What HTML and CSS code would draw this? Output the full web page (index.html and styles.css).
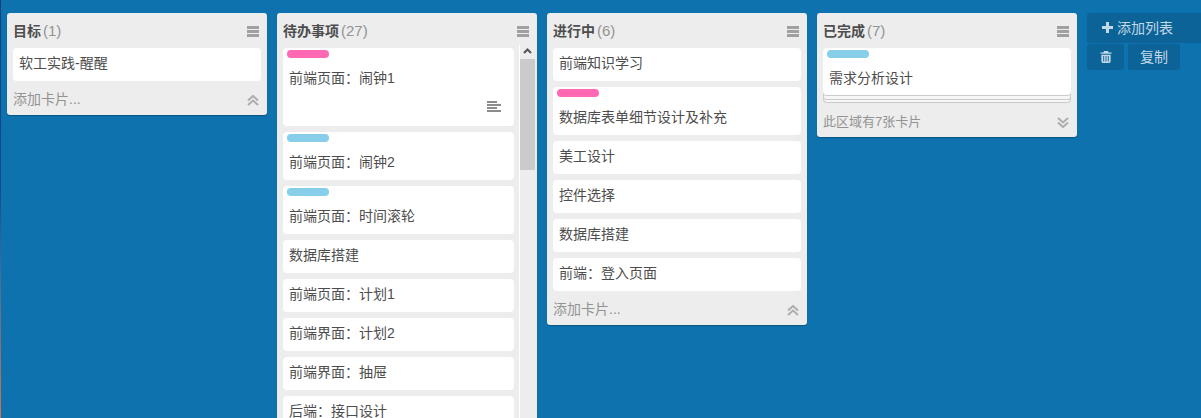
FILE: index.html
```html
<!DOCTYPE html>
<html lang="zh">
<head>
<meta charset="utf-8">
<title>看板</title>
<link rel="stylesheet" href="styles.css">
</head>
<body>
<main class="board">
  <section class="list">
    <header class="list-head"><h2 class="list-title">目标<span class="count">(1)</span></h2><span class="menu"><i></i><i></i><i></i></span></header>
    <div class="cards">
      <article class="card"><p class="card-text">软工实践-醒醒</p></article>
    </div>
    <footer class="list-foot"><span>添加卡片...</span>
      <svg class="chev" viewBox="0 0 12 11"><path d="M1 5.500 6 1l5 4.500M1 10l5-4.500L11 10" /></svg></footer>
  </section>

  <section class="list list-tall">
    <header class="list-head"><h2 class="list-title">待办事项<span class="count">(27)</span></h2><span class="menu"><i></i><i></i><i></i></span></header>
    <div class="scroll-wrap">
      <div class="cards cards-scroll">
        <article class="card has-label has-desc"><span class="label pink"></span><p class="card-text">前端页面：闹钟1</p>
          <svg class="desc" viewBox="0 0 14 11"><path d="M0 0h10v2H0zM0 3h14v2H0zM0 6h10v2H0zM0 9h14v2H0z"/></svg></article>
        <article class="card has-label"><span class="label blue"></span><p class="card-text">前端页面：闹钟2</p></article>
        <article class="card has-label"><span class="label blue"></span><p class="card-text">前端页面：时间滚轮</p></article>
        <article class="card"><p class="card-text">数据库搭建</p></article>
        <article class="card"><p class="card-text">前端页面：计划1</p></article>
        <article class="card"><p class="card-text">前端界面：计划2</p></article>
        <article class="card"><p class="card-text">前端界面：抽屉</p></article>
        <article class="card"><p class="card-text">后端：接口设计</p></article>
      </div>
      <div class="scrollbar">
        <svg class="scroll-up" viewBox="0 0 9 6"><path d="M1 5l3.500-3.500L8 5"/></svg>
        <div class="thumb"></div>
      </div>
    </div>
  </section>

  <section class="list">
    <header class="list-head"><h2 class="list-title">进行中<span class="count">(6)</span></h2><span class="menu"><i></i><i></i><i></i></span></header>
    <div class="cards">
      <article class="card"><p class="card-text">前端知识学习</p></article>
      <article class="card has-label"><span class="label pink"></span><p class="card-text">数据库表单细节设计及补充</p></article>
      <article class="card"><p class="card-text">美工设计</p></article>
      <article class="card"><p class="card-text">控件选择</p></article>
      <article class="card"><p class="card-text">数据库搭建</p></article>
      <article class="card"><p class="card-text">前端：登入页面</p></article>
    </div>
    <footer class="list-foot"><span>添加卡片...</span>
      <svg class="chev" viewBox="0 0 12 11"><path d="M1 5.500 6 1l5 4.500M1 10l5-4.500L11 10" /></svg></footer>
  </section>

  <section class="list">
    <header class="list-head"><h2 class="list-title">已完成<span class="count">(7)</span></h2><span class="menu"><i></i><i></i><i></i></span></header>
    <div class="cards">
      <div class="stack">
        <article class="card has-label card-top"><span class="label blue"></span><p class="card-text">需求分析设计</p></article>
        <div class="stack-edge edge-front"></div>
        <div class="stack-edge edge-back"></div>
      </div>
    </div>
    <footer class="list-foot foot-done"><span>此区域有7张卡片</span>
      <svg class="chev" viewBox="0 0 12 11"><path d="M1 1l5 4.500L11 1M1 5.500 6 10l5-4.500" /></svg></footer>
  </section>

  <aside class="actions">
    <button class="add-list" type="button"><span class="plus"></span>添加列表</button>
    <div class="action-row">
      <button class="act act-trash" type="button" aria-label="删除">
        <svg viewBox="0 0 12 13"><path d="M4 0h4l1 1.500h3V3H0V1.500h3zM1 4h10v7.500q0 1.500-1.500 1.500h-7Q1 13 1 11.500zM3 5.500v6h1v-6zM5.500 5.500v6h1v-6zM8 5.500v6h1v-6z" fill-rule="evenodd"/></svg>
      </button>
      <button class="act act-copy" type="button">复制</button>
    </div>
  </aside>
</main>
</body>
</html>
```

FILE: styles.css
```css
* { box-sizing: border-box; }
html, body { height: 100%; }
body {
  margin: 0;
  background: #0d72ae;
  overflow: hidden;
  font-family: "Liberation Sans", "Noto Sans CJK SC", sans-serif;
  font-size: 14px;
  color: #4d4d4d;
}
body::before {
  content: "";
  position: fixed;
  left: 0;
  top: 0;
  bottom: 0;
  width: 1px;
  background: linear-gradient(#123f80 0, #124a8c 45%, #3f6f98 65%, #d2714f 100%);
}
.board {
  display: flex;
  align-items: flex-start;
  gap: 10px;
  padding: 13px 0 0 7px;
  height: 100%;
  overflow: hidden;
}
.list {
  flex: 0 0 260px;
  background: #ededed;
  border-radius: 3px;
  box-shadow: 0 1px 1px rgba(0,0,0,.25);
}
.list-tall { height: 500px; }
.list-head {
  display: flex;
  justify-content: space-between;
  align-items: flex-start;
  height: 35px;
  padding: 10px 8px 0 6px;
}
.list-title {
  margin: 0;
  font-size: 14px;
  line-height: 16px;
  font-weight: 700;
  color: #4d4d4d;
}
.count { margin-left: 2px; font-size: 15px; font-weight: 400; color: #939393; }
.menu {
  display: flex;
  flex-direction: column;
  gap: 1.5px;
  width: 12px;
  margin-top: 3px;
}
.menu i { display: block; height: 2.5px; background: #a0a0a0; }
.cards {
  display: flex;
  flex-direction: column;
  gap: 6px;
  padding: 0 6px;
}
.card {
  position: relative;
  background: #fff;
  border-radius: 4px;
  padding: 6px 6px 9px;
  min-height: 33px;
}
.card-text {
  margin: 0;
  font-size: 14px;
  line-height: 18px;
  color: #4d4d4d;
}
.has-label { padding-top: 21px; padding-bottom: 9px; }
.has-desc { height: 78px; }
.label {
  position: absolute;
  top: 2px;
  left: 4px;
  width: 42px;
  height: 8px;
  border-radius: 4px;
}
.pink { background: #ff69b4; }
.blue { background: #87ceeb; }
.desc {
  position: absolute;
  right: 13px;
  top: 53px;
  width: 14px;
  height: 11px;
  fill: #8c8c8c;
}
.scroll-wrap { display: flex; height: 465px; }
.cards-scroll { flex: 0 0 237px; padding-right: 0; overflow: hidden; }
.cards-scroll .card { flex: none; }
.scrollbar {
  margin-left: 5px;
  width: 16px;
  margin-top: -3px;
  border-left: 1px solid #fff;
  background: #ededed;
}
.scroll-up {
  display: block;
  width: 9px;
  height: 6px;
  margin: 3px 0 0 3px;
  fill: none;
  stroke: #555;
  stroke-width: 2;
}
.thumb { height: 111px; margin-top: 5px; width: 15px; background: #cbcbcb; }
.list-foot {
  display: flex;
  justify-content: space-between;
  align-items: center;
  height: 34px;
  padding: 0 8px 0 6px;
  color: #939393;
  font-size: 14px;
}
.foot-done { font-size: 13px; }
.chev {
  width: 12px;
  height: 11px;
  margin-top: 5px;
  fill: none;
  stroke: #adadad;
  stroke-width: 2;
}
.stack { position: relative; height: 55px; }
.card-top { z-index: 2; height: 47px; box-shadow: 0 1px 0 #cbcbcb; }
.stack-edge {
  position: absolute;
  left: 0;
  right: 0;
  border: 1px solid #cbcbcb;
  border-top: 0;
  background: #f6f6f6;
}
.edge-front { z-index: 1; top: 40px; height: 12px; border-radius: 0 0 3px 3px; }
.edge-back { top: 40px; height: 15px; border-radius: 0 0 4px 4px; }
.actions {
  flex: 0 0 114px;
  display: flex;
  flex-direction: column;
  gap: 1px;
}
button {
  font: inherit;
  border: 0;
  color: #c3d9e8;
  background: #0b6397;
  padding: 0;
  border-radius: 3px;
}
.add-list {
  display: flex;
  align-items: center;
  height: 30px;
  padding: 0 0 2px 15px;
  border-radius: 3px 0 0 3px;
}
.plus {
  display: block;
  width: 11px;
  height: 11px;
  margin-right: 4px;
  background:
    linear-gradient(#c3d9e8, #c3d9e8) center / 11px 3px no-repeat,
    linear-gradient(#c3d9e8, #c3d9e8) center / 3px 11px no-repeat;
}
.action-row { display: flex; gap: 4px; }
.act { height: 26px; display: flex; align-items: center; justify-content: center; padding-bottom: 1px; }
.act-trash { width: 37px; }
.act-trash svg { width: 12px; height: 12px; fill: #c3d9e8; }
.act-copy { width: 52px; padding-bottom: 3px; }
```
